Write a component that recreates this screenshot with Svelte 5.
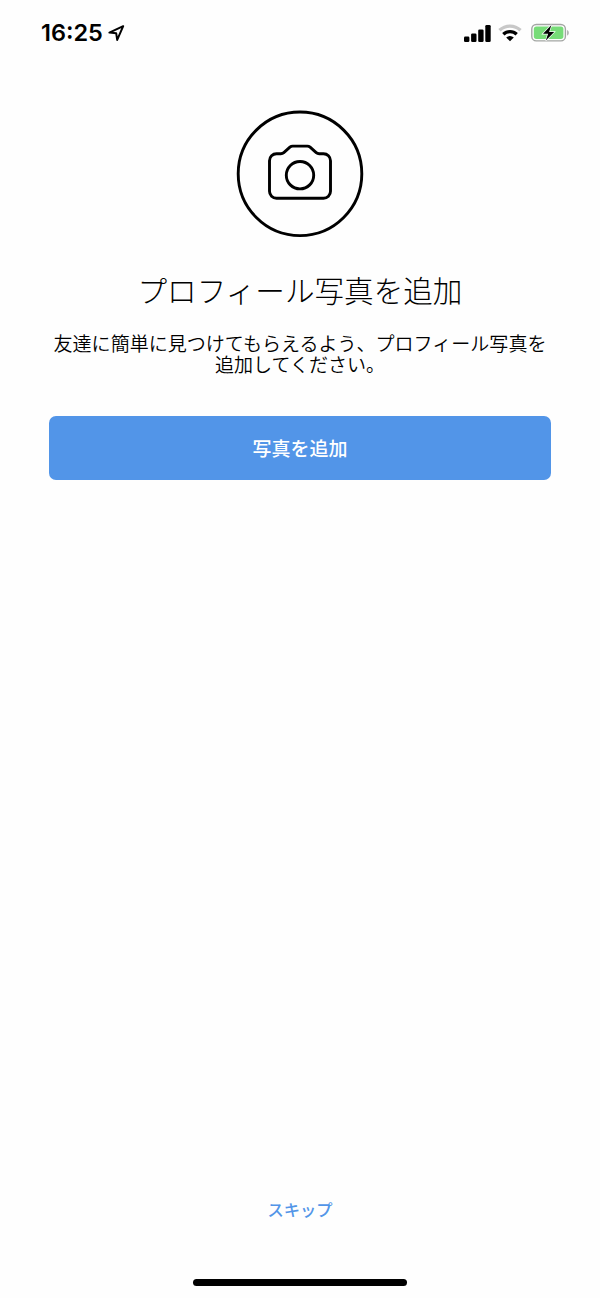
<!--
  Add profile photo screen
-->

<script>
  let {
    time = "16:25",
    title = "プロフィール写真を追加",
    lines = ["友達に簡単に見つけてもらえるよう、プロフィール写真を", "追加してください。"],
  } = $props();

  // Signal bar heights, weakest first
  const bars = [5.5, 8.5, 12.5, 17];
</script>

<main class="screen">
  <header class="status-bar">
    <span class="time">{time}</span>
    <svg class="location" width="17" height="17" viewBox="0 0 17 17">
      <path d="M15.2 1.2 1.4 7.6 8.2 8.3 9.2 14.9Z" />
    </svg>

    <div class="indicators">
      <svg class="signal" width="27" height="17" viewBox="0 0 27 17">
        {#each bars as height, i}
          <rect x={i * 7.1} y={17 - height} width="5.4" {height} rx="1.3" />
        {/each}
      </svg>

      <svg class="wifi" width="24" height="18" viewBox="0 0 24 18">
        <path class="weak" d="M1.5 6.3a15.2 15.2 0 0 1 21 0" />
        <path d="M5.3 10.3a9.7 9.7 0 0 1 13.4 0" />
        <path class="dot" d="M12 17.3 8.2 13.5a5.4 5.4 0 0 1 7.6 0Z" />
      </svg>

      <svg class="battery" width="39" height="20" viewBox="0 0 39 20">
        <rect class="case" x=".8" y="1.5" width="33.6" height="16.4" rx="4.5" />
        <rect class="level" x="2.8" y="3.5" width="29.6" height="12.4" rx="2.6" />
        <path class="cap" d="M36.2 7c2 .8 2 4.8 0 5.6Z" />
        <path class="bolt" d="M20.4 2 12 10.7h5.1L14.8 17.6 23.2 8.9h-5.1Z" />
      </svg>
    </div>
  </header>

  <section class="content">
    <svg class="camera" width="128" height="128" viewBox="0 0 128 128">
      <circle cx="64" cy="63.8" r="61.8" />
      <path
        d="M40.5 43.7h4.4c1.2 0 2-.3 2.9-1.1l6.1-5.4c.9-.8 1.6-1.1 2.8-1.1h14.6c1.2 0 1.9.3 2.8 1.1l6.1 5.4c.9.8 1.7 1.1 2.9 1.1h4.4a7 7 0 0 1 7 7v30.6a7 7 0 0 1-7 7h-47a7 7 0 0 1-7-7V50.7a7 7 0 0 1 7-7Z"
      />
      <circle cx="64" cy="65.2" r="13.7" />
    </svg>

    <h1>{title}</h1>
    <p class="description">
      {#each lines as line}
        <span>{line}</span>
      {/each}
    </p>
    <button class="add">写真を追加</button>
  </section>

  <footer>
    <button class="skip">スキップ</button>
    <div class="home-indicator"></div>
  </footer>
</main>

<style>
  :global(body) {
    background: #fefefe;
  }

  .screen {
    display: flex;
    flex-direction: column;
    box-sizing: border-box;
    width: 600px;
    height: 1298px;
    background: #fefefe;
    color: #000;
    font-family: "Noto Sans CJK JP", sans-serif;
  }

  .status-bar {
    display: flex;
    align-items: center;
    height: 66px;
    padding: 0 30px 0 41px;
  }

  .time {
    width: 67px;
    font-family: Inter, sans-serif;
    font-size: 23.5px;
    font-weight: 600;
    line-height: 28px;
  }

  .location {
    fill: none;
    stroke: #000;
    stroke-width: 2;
    stroke-linejoin: round;
  }

  .indicators {
    display: flex;
    align-items: center;
    margin-left: auto;
  }

  .wifi {
    margin: 0 9px 0 7px;
    fill: none;
    stroke: #000;
    stroke-width: 3.3;
  }

  .wifi .weak {
    stroke: #c8c8c8;
  }

  .wifi .dot {
    fill: #000;
    stroke: none;
  }

  .battery .case {
    fill: none;
    stroke: #a3a6a3;
    stroke-width: 1.4;
  }

  .battery .level {
    fill: #77dc78;
  }

  .battery .cap {
    fill: #a3a6a3;
  }

  .battery .bolt {
    fill: #000;
    stroke: #fefefe;
    stroke-width: 1.4;
    paint-order: stroke;
  }

  .content {
    display: flex;
    flex-direction: column;
    align-items: center;
    padding: 44px 49px 0;
  }

  .camera {
    fill: none;
    stroke: #000;
    stroke-width: 2.9;
  }

  h1 {
    margin: 30px 0 0;
    font-size: 29.6px;
    font-weight: 300;
    line-height: 44px;
    white-space: nowrap;
  }

  .description {
    margin: 20px 0 0;
    font-size: 19.05px;
    font-weight: 350;
    line-height: 21px;
    text-align: center;
  }

  .description span {
    display: block;
    white-space: nowrap;
  }

  button {
    padding: 0;
    border: none;
    font-family: inherit;
    cursor: pointer;
  }

  .add {
    width: 502px;
    height: 64px;
    margin-top: 42px;
    padding-bottom: 2px;
    border-radius: 7px;
    background: #5295e8;
    color: #fff;
    font-size: 19px;
    font-weight: 500;
  }

  footer {
    display: flex;
    flex-direction: column;
    align-items: center;
    margin-top: auto;
    padding-bottom: 12px;
  }

  .skip {
    background: none;
    color: #5295e8;
    font-size: 16.3px;
    font-weight: 500;
    line-height: 30px;
  }

  .home-indicator {
    width: 214px;
    height: 7px;
    margin-top: 55px;
    border-radius: 4px;
    background: #000;
  }
</style>
